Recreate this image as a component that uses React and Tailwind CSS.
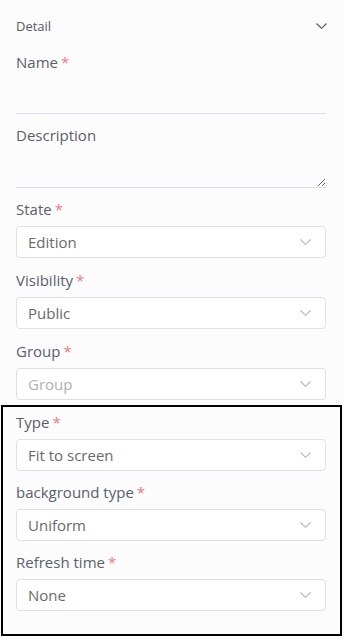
import React from 'react';

function Chevron({ className }) {
  return (
    <svg className={className} width="11" height="6" viewBox="0 0 11 6" fill="none">
      <path d="M0.5 0.5 L5.5 5.3 L10.5 0.5" stroke="currentColor" strokeWidth="1.1" />
    </svg>
  );
}

function Label({ text, required }) {
  return (
    <div className="h-5 text-[15px] leading-5 text-[#5a606c]">
      {text}
      {required && <span className="ml-[3px] text-[#ef7b7b]">*</span>}
    </div>
  );
}

function SelectField({ label, value, placeholder, className = 'mb-[12px]' }) {
  return (
    <div className={className}>
      <Label text={label} required />
      <div className="mt-[7px] h-8 flex items-center justify-between rounded-[4px] border border-[#dfe0e8] bg-white pl-[11px] pr-[14px]">
        <span className={`text-[15px] ${placeholder ? 'text-[#b0b0b6]' : 'text-[#6a6a6a]'}`}>{value}</span>
        <Chevron className="text-[#b4b6bf]" />
      </div>
    </div>
  );
}

export default function App() {
  return (
    <div className="w-[344px] min-h-[640px] bg-[#fcfcfd] font-['Open_Sans',sans-serif]">
      <div className="flex items-center justify-between pl-4 pr-[17px] pt-[17px] h-[35px]">
        <span className="text-[13px] leading-[18px] text-[#555a64]">Detail</span>
        <Chevron className="text-[#555]" />
      </div>

      <div className="pl-4 pr-[18px]">
        <div className="mt-[17px]">
          <Label text="Name" required />
          <input className="block w-full h-[42px] border-b border-[#dcdde6] bg-transparent outline-none" />
        </div>
        <div className="mt-[11px]">
          <Label text="Description" />
          <textarea className="block w-full h-[43px] border-b border-[#dcdde6] bg-transparent outline-none resize-y" />
        </div>
        <div className="mt-[11px]">
          <SelectField label="State" value="Edition" />
          <SelectField label="Visibility" value="Public" />
          <SelectField label="Group" value="Group" placeholder className="" />
        </div>
      </div>

      <div className="ml-[1px] mr-[2px] mt-[5px] border-2 border-black pl-[13px] pr-[14px] pt-[5px] pb-[23px]">
        <SelectField label="Type" value="Fit to screen" className="mb-[11px]" />
        <SelectField label="background type" value="Uniform" className="mb-[11px]" />
        <SelectField label="Refresh time" value="None" className="" />
      </div>
    </div>
  );
}
